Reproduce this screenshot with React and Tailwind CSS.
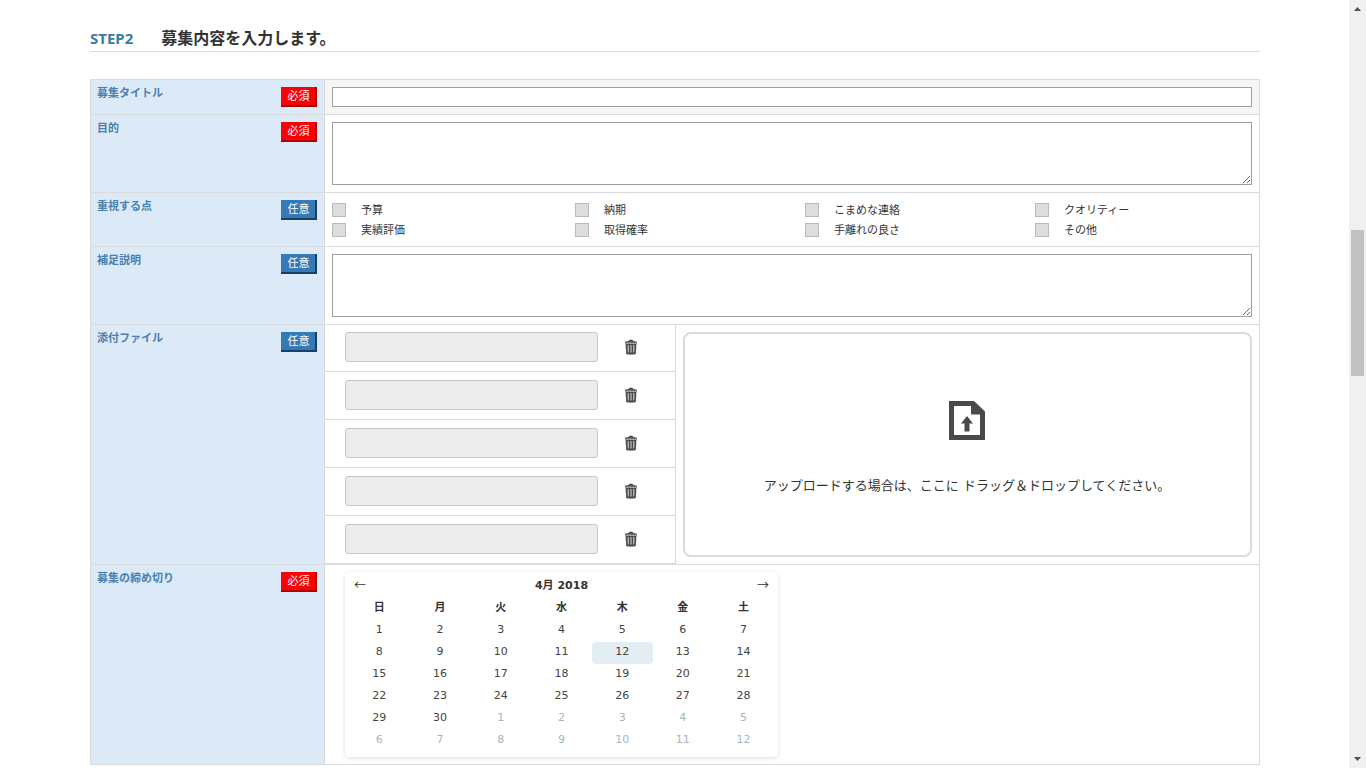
import React from "react";

const POINTS = [
  "予算", "納期", "こまめな連絡", "クオリティー",
  "実績評価", "取得確率", "手離れの良さ", "その他",
];
const WEEKDAYS = ["日", "月", "火", "水", "木", "金", "土"];
const DAYS = Array.from({ length: 42 }, (_, i) => (i < 30 ? i + 1 : i - 29));
const WEEKS = [0, 1, 2, 3, 4, 5].map((w) => DAYS.slice(w * 7, w * 7 + 7));

function Badge({ required }) {
  return (
    <span
      className={
        "flex h-5 w-9 shrink-0 items-center justify-center border-2 border-t-0 border-l-0 pt-px pl-px text-[11px] leading-none text-white " +
        (required ? "border-[#b00000] bg-[#fb0007]" : "border-[#183f66] bg-[#337ab7]")
      }
    >
      {required ? "必須" : "任意"}
    </span>
  );
}

function Row({ label, htmlFor, required, bodyClass = "p-[7px]", last, children }) {
  const Tag = htmlFor ? "label" : "span";
  return (
    <div className={"flex " + (last ? "" : "border-b border-[#d9dbdc]")}>
      <div className="flex w-[234px] shrink-0 items-start justify-between border-r border-[#d3dae0] bg-[#dceaf7] py-[7px] pr-[7px] pl-[6px]">
        <Tag htmlFor={htmlFor} className="text-[11px] leading-[14px] font-bold text-[#4a80b0]">
          {label}
        </Tag>
        <Badge required={required} />
      </div>
      <div className={"min-w-0 flex-1 " + bodyClass}>{children}</div>
    </div>
  );
}

function TrashIcon() {
  return (
    <svg width="12" height="16" viewBox="0 0 12 16" fill="none" aria-hidden="true">
      <path d="M3.6 2 Q4 1 5 .8 H7 Q8 1 8.4 2 L11 2.4 Q12 2.6 12 3.2 V4.6 H0 V3.2 Q0 2.6 1 2.4Z" fill="#4b4b4b" />
      <path d="M1.2 3.6H10.8" stroke="#8d8d8d" strokeWidth=".8" />
      <path d="M.6 5H11.4L10.9 14Q10.8 15.5 9.4 15.5H2.6Q1.2 15.5 1.1 14Z" fill="#4b4b4b" />
      <path d="M3.2 6V13.6M6 6V13.6M8.8 6V13.6" stroke="#cfcfcf" strokeWidth="1.1" />
    </svg>
  );
}

function UploadIcon() {
  return (
    <svg width="36" height="39" viewBox="0 0 36 39" aria-hidden="true">
      <path
        fillRule="evenodd"
        fill="#4a4a4a"
        d="M0 0H25L36 10.5V39H0ZM5 5V34H31V13.5H22V5Z"
      />
      <path fill="#4a4a4a" d="M18 15L24 22.5H20.5V30.5H15.5V22.5H12Z" />
    </svg>
  );
}

function Calendar() {
  return (
    <div className="w-[433px] rounded-sm bg-white px-1 pt-1 pb-[5px] shadow-[0_1px_4px_rgba(0,0,0,0.14)]">
      <div className="flex h-[22px] items-center justify-between px-[5px] pb-1 text-[11px] leading-none">
        <button type="button" aria-label="前の月" className="font-['Noto_Sans_CJK_JP',sans-serif] text-xs leading-none">←</button>
        <span className="font-bold">4月 2018</span>
        <button type="button" aria-label="次の月" className="font-['Noto_Sans_CJK_JP',sans-serif] text-xs leading-none">→</button>
      </div>
      <table className="w-full table-fixed border-collapse text-center text-[11px] leading-none">
        <thead>
          <tr>
            {WEEKDAYS.map((d) => (
              <th key={d} scope="col" className="h-[22px] p-0 pb-1 align-middle font-bold">{d}</th>
            ))}
          </tr>
        </thead>
        <tbody>
          {WEEKS.map((week, w) => (
            <tr key={w}>
              {week.map((day, i) => {
                const n = w * 7 + i + 1;
                return (
                  <td key={n} className="h-[22px] p-0">
                    <button
                      type="button"
                      className={
                        "flex h-[22px] w-full items-center justify-center rounded pb-1 " +
                        (n === 12 ? "bg-[#e2edf4] " : "") +
                        (n > 30 ? "text-[#a5b5bf]" : "text-[#444]")
                      }
                    >
                      {day}
                    </button>
                  </td>
                );
              })}
            </tr>
          ))}
        </tbody>
      </table>
    </div>
  );
}

export default function App() {
  return (
    <div className="flex min-h-screen bg-white font-['DejaVu_Sans','Noto_Sans_CJK_JP',sans-serif] text-[#333]" lang="ja">
      <main className="min-w-0 flex-1 pl-px">
        <form className="mx-auto max-w-[1170px]">
          <h2 className="flex h-[52px] items-center gap-7 border-b border-[#ddd] pt-[26px] text-base font-bold">
            <span className="font-['Noto_Sans',sans-serif] text-[15px] text-[#3a7ba6]">STEP2</span>
            <span>募集内容を入力します。</span>
          </h2>

          <div className="mt-[27px] border border-[#d9dbdc]">
            <Row label="募集タイトル" htmlFor="title" required bodyClass="bg-[#f5f5f5] p-[7px]">
              <input id="title" type="text" className="block h-5 w-full border border-[#a0a0a0] bg-white px-1 text-[11px]" />
            </Row>

            <Row label="目的" htmlFor="purpose" required>
              <textarea id="purpose" className="block h-[63px] w-full border border-[#a0a0a0] bg-white px-1 text-[11px]" />
            </Row>

            <Row label="重視する点" bodyClass="px-[7px] pt-[7px] pb-[6px]">
              <div className="grid grid-cols-[243fr_230fr_230fr_217fr]">
                {POINTS.map((p) => (
                  <label key={p} className="flex h-5 items-center gap-[15px] text-[11px] leading-none">
                    <input type="checkbox" className="h-[14px] w-[14px] shrink-0 appearance-none border border-[#bbb] bg-[#ddd]" />
                    {p}
                  </label>
                ))}
              </div>
            </Row>

            <Row label="補足説明" htmlFor="note">
              <textarea id="note" className="block h-[63px] w-full border border-[#a0a0a0] bg-white px-1 text-[11px]" />
            </Row>

            <Row label="添付ファイル" bodyClass="flex">
              <ul className="w-[351px] shrink-0 border-r border-[#d9dbdc]">
                {[1, 2, 3, 4, 5].map((n) => (
                  <li key={n} className="flex h-12 items-center gap-[27px] border-b border-[#d9dbdc] pb-px pl-5 first:h-[47px] first:pb-[2px]">
                    <input
                      type="text"
                      readOnly
                      aria-label={"添付ファイル" + n}
                      className="h-[30px] w-[253px] rounded-[3px] border border-[#c8c8c8] bg-[#ececec] px-2 text-xs"
                    />
                    <button type="button" aria-label="削除"><TrashIcon /></button>
                  </li>
                ))}
              </ul>
              <div className="flex min-w-0 flex-1 p-[7px]">
                <div className="flex flex-1 flex-col items-center justify-center gap-[37px] rounded-lg border-2 border-[#d9dbdb] pt-[7px] pr-px text-[13px] leading-[18px]">
                  <UploadIcon />
                  <p>アップロードする場合は、ここに ドラッグ＆ドロップしてください。</p>
                </div>
              </div>
            </Row>

            <Row label="募集の締め切り" required last bodyClass="py-[7px] pl-5">
              <Calendar />
            </Row>
          </div>
        </form>
      </main>

      <div className="flex w-[17px] shrink-0 flex-col items-center justify-between bg-[#f0f0f0] py-[7px]" aria-hidden="true">
        <svg width="7" height="4" viewBox="0 0 7 4"><path d="M3.5 0L7 4H0Z" fill="#505050" /></svg>
        <div className="flex w-full flex-1 flex-col items-center pt-[219px]">
          <div className="h-[146px] w-[13px] bg-[#c1c1c1]" />
        </div>
        <svg width="7" height="4" viewBox="0 0 7 4"><path d="M0 0H7L3.5 4Z" fill="#505050" /></svg>
      </div>
    </div>
  );
}
